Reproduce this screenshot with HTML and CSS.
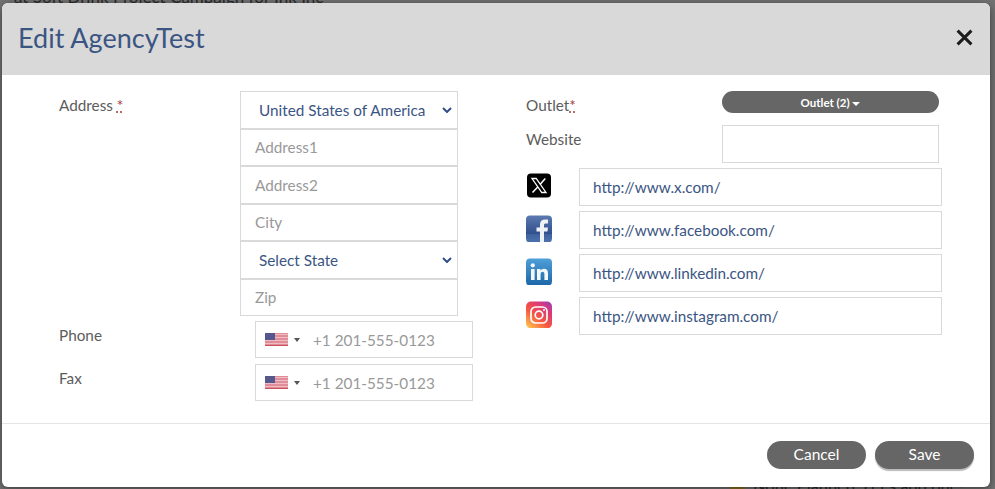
FILE: index.html
```html
<!DOCTYPE html>
<html lang="en">
<head>
    <meta charset="UTF-8">
    <meta name="viewport" content="width=device-width, initial-scale=1.0">
    <title>Edit AgencyTest</title>
    <link rel="stylesheet" href="styles.css">
</head>
<body>

    <!-- Page behind the modal -->
    <p class="behind-top">at Soft Drink Project Campaign for Ink Inc</p>
    <p class="behind-bottom"><span class="behind-dot"></span>None Planned. Let's add one!</p>

    <div class="modal">
        <div class="modal-header">
            <h1>Edit AgencyTest</h1>
            <svg class="close-icon" viewBox="0 0 16 16" aria-label="Close">
                <path d="M1.5 1.5 14.5 14.5M14.5 1.5 1.5 14.5" />
            </svg>
        </div>

        <div class="modal-body">
            <!-- Left column -->
            <div class="col-left">
                <div class="address-row">
                    <label class="field-label">Address <abbr class="req">*</abbr></label>
                    <div class="address-stack">
                        <div class="stack-select">United States of America
                            <svg class="chevron" viewBox="0 0 10 6"><path d="M1 1 5 5 9 1" /></svg>
                        </div>
                        <input type="text" placeholder="Address1">
                        <input type="text" placeholder="Address2">
                        <input type="text" placeholder="City">
                        <div class="stack-select">Select State
                            <svg class="chevron" viewBox="0 0 10 6"><path d="M1 1 5 5 9 1" /></svg>
                        </div>
                        <input type="text" placeholder="Zip">
                    </div>
                </div>

                <div class="phone-row">
                    <label class="field-label">Phone</label>
                    <div class="phone-box">
                        <svg class="flag" viewBox="0 0 23 13">
                            <rect width="23" height="13" fill="#e08d97" />
                            <path d="M0 1.5H23M0 4.5H23M0 7.5H23M0 10.5H23" stroke="#eebcc2" />
                            <rect y="12" width="23" height="1" fill="#c9505f" />
                            <rect width="10" height="7" fill="#54588c" />
                        </svg>
                        <span class="flag-caret"></span>
                        <input type="text" placeholder="+1 201-555-0123">
                    </div>
                </div>

                <div class="phone-row">
                    <label class="field-label">Fax</label>
                    <div class="phone-box">
                        <svg class="flag" viewBox="0 0 23 13">
                            <rect width="23" height="13" fill="#e08d97" />
                            <path d="M0 1.5H23M0 4.5H23M0 7.5H23M0 10.5H23" stroke="#eebcc2" />
                            <rect y="12" width="23" height="1" fill="#c9505f" />
                            <rect width="10" height="7" fill="#54588c" />
                        </svg>
                        <span class="flag-caret"></span>
                        <input type="text" placeholder="+1 201-555-0123">
                    </div>
                </div>
            </div>

            <!-- Right column -->
            <div class="col-right">
                <div class="outlet-row">
                    <label class="field-label">Outlet<abbr class="req">*</abbr></label>
                    <button class="outlet-btn">Outlet (2) <span class="btn-caret"></span></button>
                </div>
                <div class="website-row">
                    <label class="field-label">Website</label>
                    <input type="text">
                </div>

                <div class="social-row">
                    <svg class="social-icon" viewBox="0 0 26 26">
                        <rect x="1" width="24" height="24" y="1" rx="4" fill="#000" />
                        <path d="M6 6h4.2l9.8 14h-4.200z" fill="none" stroke="#fff" stroke-width="1.300" />
                        <path d="M19.300 6 14 12M12 14.300 6.500 20" stroke="#fff" stroke-width="1.500" />
                    </svg>
                    <input type="text" class="link-input" value="http://www.x.com/">
                </div>
                <div class="social-row">
                    <svg class="social-icon" viewBox="0 0 26 26">
                        <defs>
                            <linearGradient id="fbGrad" x1="0" y1="0" x2="0" y2="1">
                                <stop offset="0" stop-color="#5a7ab0" />
                                <stop offset="0.68" stop-color="#304e8c" />
                                <stop offset="0.7" stop-color="#3f629f" />
                                <stop offset="1" stop-color="#4d72ac" />
                            </linearGradient>
                        </defs>
                        <rect width="26" height="27" rx="4" fill="url(#fbGrad)" />
                        <path d="M14 27V16h-3.500v-4H14V9c0-3.400 2-5 5-5h3v4h-2c-1.500 0-2 .6-2 2v2h4l-.6 4H18v11z" fill="#eef1f6" />
                    </svg>
                    <input type="text" class="link-input" value="http://www.facebook.com/">
                </div>
                <div class="social-row">
                    <svg class="social-icon" viewBox="0 0 26 26">
                        <defs>
                            <linearGradient id="inGrad" x1="0" y1="0" x2="0" y2="1">
                                <stop offset="0" stop-color="#4f9fd8" />
                                <stop offset="1" stop-color="#1c67a8" />
                            </linearGradient>
                        </defs>
                        <rect width="26" height="27" rx="4" fill="url(#inGrad)" />
                        <rect x="5" y="10.500" width="3.600" height="11" fill="#f4f8fb" />
                        <circle cx="6.800" cy="6.800" r="2.100" fill="#f4f8fb" />
                        <path d="M11 10.500h3.400v1.600c.7-1.100 2-1.900 3.500-1.900 3 0 4.100 1.900 4.100 4.900v6.400h-3.600v-5.800c0-1.500-.5-2.400-1.800-2.400s-2 1-2 2.400v5.800H11z" fill="#f4f8fb" />
                    </svg>
                    <input type="text" class="link-input" value="http://www.linkedin.com/">
                </div>
                <div class="social-row">
                    <svg class="social-icon" viewBox="0 0 26 26">
                        <defs>
                            <linearGradient id="igGrad" x1="0.1" y1="1" x2="0.9" y2="0">
                                <stop offset="0" stop-color="#fdc84f" />
                                <stop offset="0.4" stop-color="#f8583f" />
                                <stop offset="0.75" stop-color="#dd3a74" />
                                <stop offset="1" stop-color="#a43bb0" />
                            </linearGradient>
                        </defs>
                        <rect width="26" height="27" rx="5" fill="url(#igGrad)" />
                        <rect x="5" y="5.500" width="16" height="16" rx="4.500" fill="none" stroke="#fff" stroke-width="1.700" />
                        <circle cx="13" cy="13.500" r="3.800" fill="none" stroke="#fff" stroke-width="1.700" />
                        <circle cx="18" cy="8.500" r="1" fill="#fff" />
                    </svg>
                    <input type="text" class="link-input" value="http://www.instagram.com/">
                </div>
            </div>
        </div>

        <div class="modal-footer">
            <button class="footer-btn">Cancel</button>
            <button class="footer-btn save">Save</button>
        </div>
    </div>

</body>
</html>
```

FILE: styles.css
```css
* {
    box-sizing: border-box;
}

html,
body {
    height: 100%;
}

body {
    margin: 0;
    overflow: hidden;
    position: relative;
    background-color: #737373;
    font-family: Lato, "Open Sans", sans-serif;
    font-size: 15.300px;
    color: #5c5c5c;
}

/* Texto detras del modal */
.behind-top,
.behind-bottom {
    position: absolute;
    margin: 0;
    color: #2b2b2b;
    white-space: nowrap;
}

.behind-top {
    top: -14px;
    left: 14px;
    font-size: 17px;
}

.behind-bottom {
    top: 476px;
    left: 730px;
    font-size: 16.500px;
}

.behind-dot {
    display: inline-block;
    width: 15px;
    height: 12px;
    margin-right: 8px;
    background-color: #8a7423;
}

/* Modal */
.modal {
    position: absolute;
    top: 3px;
    left: 2px;
    width: 988px;
    height: 484px;
    background-color: #fff;
    border-radius: 6px;
    box-shadow: 0 2px 8px rgba(0, 0, 0, 0.5);
    overflow: hidden;
}

.modal-header {
    height: 72px;
    padding: 0 17px 3px 16px;
    display: flex;
    align-items: center;
    justify-content: space-between;
    background-color: #d9d9d9;
}

.modal-header h1 {
    margin: 0;
    font-size: 27px;
    font-weight: 400;
    color: #3b5583;
}

.close-icon {
    width: 17px;
    height: 17px;
    fill: none;
    stroke: #1c1c1c;
    stroke-width: 2.800;
}

.modal-body {
    height: 349px;
    display: flex;
    padding: 16px 0 0 57px;
    border-bottom: 1px solid #e5e5e5;
}

.field-label {
    display: block;
    line-height: 24px;
}

.req {
    color: #a33a3a;
    text-decoration: underline dotted;
}

input {
    font-family: inherit;
    font-size: 15.300px;
    color: #3b5583;
    background-color: #fff;
    border: 1px solid #d9d9d9;
    outline: none;
    border-radius: 0;
}

input::placeholder {
    color: #999;
    opacity: 1;
}

/* Columna izquierda */
.col-left {
    width: 467px;
}

.address-row {
    display: flex;
    margin-bottom: 5px;
}

.address-row .field-label {
    width: 181px;
    margin-top: 2px;
}

.address-stack {
    width: 218px;
    display: flex;
    flex-direction: column;
}

.address-stack input,
.stack-select {
    width: 100%;
    height: 37.500px;
}

.address-stack input {
    padding: 0 14px;
}

.stack-select {
    display: flex;
    align-items: center;
    justify-content: space-between;
    padding: 0 5px 0 18px;
    border: 1px solid #d9d9d9;
    color: #3b5583;
}

.chevron {
    width: 10px;
    height: 6px;
    fill: none;
    stroke: #2f4f86;
    stroke-width: 2;
}

.phone-row {
    display: flex;
    margin-bottom: 6px;
}

.phone-row .field-label {
    width: 196px;
    line-height: 28px;
}

.phone-box {
    width: 218px;
    height: 37px;
    display: flex;
    align-items: center;
    padding-left: 9px;
    border: 1px solid #d9d9d9;
}

.phone-box input {
    width: 150px;
    border: none;
    padding: 0 0 0 13px;
}

.flag {
    width: 23px;
    height: 13px;
}

.flag-caret {
    width: 0;
    height: 0;
    margin-left: 6px;
    border-left: 3px solid transparent;
    border-right: 3px solid transparent;
    border-top: 4px solid #555;
}

/* Columna derecha */
.col-right {
    width: 416px;
}

.outlet-row,
.website-row {
    display: flex;
}

.outlet-row {
    height: 22px;
}

.outlet-row .field-label,
.website-row .field-label {
    width: 196px;
    margin-top: 2px;
}

.outlet-btn {
    width: 217px;
    height: 22px;
    border: none;
    border-radius: 11px;
    background-color: #666;
    color: #fff;
    font-family: inherit;
    font-size: 11.500px;
    font-weight: 700;
}

.btn-caret {
    display: inline-block;
    vertical-align: middle;
    width: 0;
    height: 0;
    border-left: 4px solid transparent;
    border-right: 4px solid transparent;
    border-top: 4px solid #fff;
}

.website-row {
    margin-top: 12px;
}

.website-row input {
    width: 217px;
    height: 38px;
}

.social-row {
    display: flex;
    align-items: center;
    gap: 27px;
    margin-top: 5px;
}

.social-icon {
    width: 26px;
    height: 27px;
    margin-bottom: 3px;
    flex-shrink: 0;
}

.link-input {
    width: 363px;
    height: 38px;
    padding: 0 13px;
}

/* Footer */
.modal-footer {
    display: flex;
    justify-content: flex-end;
    gap: 9px;
    padding: 17px 16px 0 0;
}

.footer-btn {
    width: 99px;
    height: 28px;
    padding: 0 0 2px 0;
    border: none;
    border-radius: 14px;
    background-color: #666;
    color: #fff;
    font-family: inherit;
    font-size: 15.500px;
}

.save {
    box-shadow: 0 2px 1px #bbb;
}
```
